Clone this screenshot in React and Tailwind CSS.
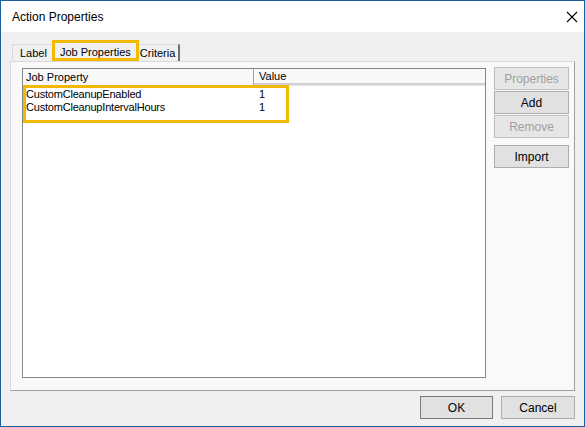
const F = { fontFamily: '"Liberation Sans", Arial, sans-serif' };

function Btn({ children, disabled, className = "" }) {
  return (
    <div
      className={`flex items-center justify-center border text-[12px] ${disabled ? "text-[#a0a0a0] border-[#bfbfbf] bg-[#e6e6e6]" : "text-black border-[#adadad] bg-[#e1e1e1]"} ${className}`}
    >
      {children}
    </div>
  );
}

export default function App() {
  return (
    <div className="w-[585px] h-[427px] border border-[#1b5fa0] bg-[#f0f0f0] flex flex-col relative" style={F}>
      <div className="h-[31px] bg-white flex items-center justify-between pl-[11px] pr-[6px]">
        <span className="text-[12px] text-black">Action Properties</span>
        <svg width="12" height="12" viewBox="0 0 12 12"><path d="M1 1L11 11M11 1L1 11" stroke="#000" strokeWidth="1.1" /></svg>
      </div>
      <div className="flex-1 px-[9px] pt-[10px] flex flex-col">
        <div className="flex items-end h-[19px] text-[11px] pl-[2px]">
          <div className="h-[17px] px-[7px] border border-b-0 border-[#d9d9d9] bg-[#f0f0f0] flex items-center">Label</div>
          <div className="h-[19px] px-[5px] border border-b-0 border-[#d9d9d9] bg-[#f0f0f0] flex items-center relative -mx-[1px]">
            Job Properties
            <div className="absolute -left-[3px] -right-[3px] -top-[3px] -bottom-[0px] border-[3px] border-[#f5b800]" />
          </div>
          <div className="h-[17px] px-[3px] border border-b-0 border-r-[#707070] border-r-2 border-[#d9d9d9] bg-[#f0f0f0] flex items-center">Criteria</div>
        </div>
        <div className="h-[330px] border border-[#d9d9d9] border-r-[#a0a0a0] border-b-[#a0a0a0] bg-[#f9f9f9] flex gap-[8px] pl-[11px] pt-[6px] pb-[12px]">
          <div className="w-[464px] border border-[#828790] bg-white relative">
            <div className="flex h-[17px] text-[11px] border-b border-[#e5e5e5]">
              <div className="w-[231px] pl-[3px] border-r border-[#a0a0a0] bg-[#f8f8f8] flex items-center">Job Property</div>
              <div className="flex-1 pl-[5px] bg-[#f8f8f8] border-b-[2px] border-[#d0d0d0] flex items-center">Value</div>
            </div>
            <div className="text-[11px] leading-[13px] pt-[2px] tracking-[-0.2px]">
              <div className="flex"><span className="w-[236px] pl-[3px]">CustomCleanupEnabled</span><span>1</span></div>
              <div className="flex"><span className="w-[236px] pl-[3px]">CustomCleanupIntervalHours</span><span>1</span></div>
            </div>
            <div className="absolute left-[0px] top-[16px] w-[266px] h-[38px] border-[3px] border-[#f5b800]" />
          </div>
          <div className="flex flex-col w-[75px] -mt-[1px]">
            <Btn disabled className="h-[23px]">Properties</Btn>
            <Btn className="h-[23px] mt-[1px]">Add</Btn>
            <Btn disabled className="h-[23px] mt-[1px]">Remove</Btn>
            <Btn className="h-[23px] mt-[7px]">Import</Btn>
          </div>
        </div>
        <div className="flex justify-end gap-[8px] mt-[5px]">
          <Btn className="w-[73px] h-[23px] !border-[#7a7a7a]">OK</Btn>
          <Btn className="w-[74px] h-[23px]">Cancel</Btn>
        </div>
      </div>
    </div>
  );
}
